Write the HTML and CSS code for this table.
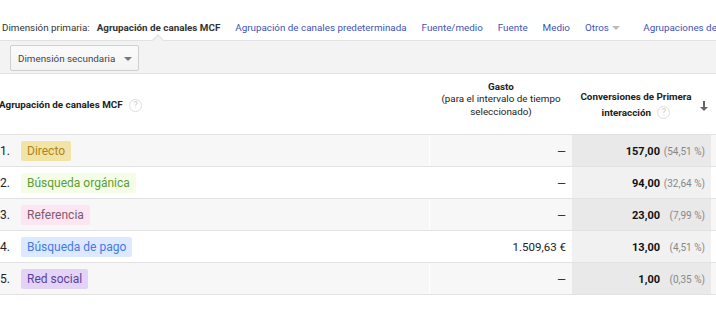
FILE: index.html
```html
<!DOCTYPE html>
<html lang="es">
<head>
    <meta charset="UTF-8">
    <meta name="viewport" content="width=device-width, initial-scale=1.0">
    <title>Agrupación de canales MCF</title>
    <link rel="stylesheet" href="styles.css">
</head>
<body>
    <div class="report">
        <div class="dimension-tabs">
            <span class="label">Dimensión primaria:</span>
            <span class="tab active">Agrupación de canales MCF</span>
            <a class="tab">Agrupación de canales predeterminada</a>
            <a class="tab">Fuente/medio</a>
            <a class="tab">Fuente</a>
            <a class="tab">Medio</a>
            <a class="tab more">Otros <span class="caret"></span></a>
            <a class="tab extra">Agrupaciones de canales</a>
        </div>

        <div class="toolbar">
            <button class="select">Dimensión secundaria <span class="caret dark"></span></button>
        </div>

        <table class="data">
            <colgroup>
                <col class="c-name">
                <col class="c-cost">
                <col class="c-conv">
                <col class="c-rest">
            </colgroup>
            <thead>
                <tr>
                    <th class="name-head"><div>Agrupación de canales MCF <span class="help">?</span></div></th>
                    <th class="cost-head"><div><b>Gasto</b><br>(para el intervalo de tiempo<br>seleccionado)</div></th>
                    <th class="conv-head">
                        <div class="conv-inner">
                            <span class="conv-title">Conversiones de Primera<br>interacción <span class="help">?</span></span>
                            <svg class="sort" width="8" height="10" viewBox="0 0 8 10">
                                <path d="M3 0h2v6h3L4 10 0 6h3z" fill="#666"/>
                            </svg>
                        </div>
                    </th>
                    <th></th>
                </tr>
            </thead>
            <tbody>
                <tr>
                    <td><span class="num">1.</span><span class="tag direct">Directo</span></td>
                    <td class="cost">&mdash;</td>
                    <td class="conv"><b>157,00</b><span class="pct">(54,51 %)</span></td>
                    <td></td>
                </tr>
                <tr>
                    <td><span class="num">2.</span><span class="tag organic">Búsqueda orgánica</span></td>
                    <td class="cost">&mdash;</td>
                    <td class="conv"><b>94,00</b><span class="pct">(32,64 %)</span></td>
                    <td></td>
                </tr>
                <tr>
                    <td><span class="num">3.</span><span class="tag referral">Referencia</span></td>
                    <td class="cost">&mdash;</td>
                    <td class="conv"><b>23,00</b><span class="pct">(7,99 %)</span></td>
                    <td></td>
                </tr>
                <tr>
                    <td><span class="num">4.</span><span class="tag paid">Búsqueda de pago</span></td>
                    <td class="cost">1.509,63 €</td>
                    <td class="conv"><b>13,00</b><span class="pct">(4,51 %)</span></td>
                    <td></td>
                </tr>
                <tr>
                    <td><span class="num">5.</span><span class="tag social">Red social</span></td>
                    <td class="cost">&mdash;</td>
                    <td class="conv"><b>1,00</b><span class="pct">(0,35 %)</span></td>
                    <td></td>
                </tr>
            </tbody>
        </table>
    </div>
</body>
</html>
```

FILE: styles.css
```css
body {
    margin: 0;
    background: #fff;
    font-family: Roboto, "Liberation Sans", Arial, sans-serif;
    color: #222;
}

.report {
    width: 716px;
    overflow: hidden;
}

/* primary dimension switcher */
.dimension-tabs {
    display: flex;
    align-items: center;
    white-space: nowrap;
    height: 14px;
    padding: 20px 0 6px 2px;
    border-bottom: 1px solid #e2e2e2;
    font-size: 9.83px;
}

.dimension-tabs .label {
    color: #333;
    margin-right: 7px;
}

.tab {
    position: relative;
    margin-right: 15px;
    color: #4151b8;
    cursor: pointer;
}

.tab.active {
    color: #333;
    font-weight: bold;
    cursor: default;
}

/* little notch under the selected tab */
.tab.active::after {
    content: "";
    position: absolute;
    left: 50%;
    bottom: -11px;
    width: 7px;
    height: 7px;
    margin-left: -4px;
    background: #f3f3f3;
    border-left: 1px solid #e2e2e2;
    border-top: 1px solid #e2e2e2;
    transform: rotate(45deg);
}

.tab.more {
    margin-right: 23px;
}

.caret {
    display: inline-block;
    width: 0;
    height: 0;
    border-left: 4px solid transparent;
    border-right: 4px solid transparent;
    border-top: 4px solid #bbb;
    vertical-align: middle;
    margin-left: 1px;
}

.caret.dark {
    border-top-color: #777;
    margin-left: 6px;
}

/* secondary dimension bar */
.toolbar {
    background: #f3f3f3;
    padding: 4px 10px 2px;
    height: 26px;
    border-bottom: 1px solid #e2e2e2;
}

.select {
    height: 26px;
    padding: 0 6px 0 7px;
    font-family: inherit;
    font-size: 9.83px;
    color: #444;
    background: linear-gradient(#fbfbfb, #f3f3f3);
    border: 1px solid #cfcfcf;
    border-radius: 2px;
}

/* report table */
.data {
    width: 730px;
    table-layout: fixed;
    border-collapse: collapse;
    font-size: 12px;
}

.c-name { width: 430px; }
.c-cost { width: 142px; }
.c-conv { width: 139px; }
.c-rest { width: 19px; }

.data th {
    height: 60px;
    padding: 0;
    font-size: 9.83px;
    border-bottom: 1px solid #e2e2e2;
    color: #222;
}

.name-head {
    text-align: left;
    font-weight: bold;
}

.name-head div {
    padding-top: 2px;
}

.name-head,
.data td:first-child {
    position: relative;
    left: -1px;
}

.cost-head {
    font-weight: normal;
    color: #444;
    line-height: 12.5px;
}

.cost-head div {
    padding-bottom: 9px;
}

.cost-head b {
    color: #222;
}

.conv-inner {
    display: flex;
    align-items: center;
    padding: 1px 0 0 2px;
    line-height: 16px;
    font-weight: bold;
}

.conv-title {
    flex: 1;
    text-align: center;
}

.sort {
    margin: 2px 3px 0 2px;
}

.help {
    display: inline-block;
    width: 11px;
    height: 11px;
    line-height: 11px;
    border: 1px solid #ddd;
    border-radius: 50%;
    color: #ccc;
    font-size: 9px;
    font-weight: normal;
    text-align: center;
    margin-left: 4px;
    vertical-align: middle;
}

.data td {
    height: 31px;
    padding: 0;
    border-bottom: 1px solid #e2e2e2;
}

.data tbody tr:nth-child(odd) {
    background: #f7f7f7;
}

.num {
    display: inline-block;
    width: 22px;
    padding-left: 1px;
    box-sizing: border-box;
    color: #222;
}

.tag {
    display: inline-block;
    padding: 3px 6px;
    border-radius: 2px;
    line-height: 14px;
}

.tag.direct   { background: #f2e3a7; color: #b08518; }
.tag.organic  { background: #f3fde8; color: #5e9e34; }
.tag.referral { background: #fde5f1; color: #7e5a70; }
.tag.paid     { background: #dde9fe; color: #4479ec; }
.tag.social   { background: #e3d3f7; color: #5a3f9c; }

.cost {
    text-align: right;
    padding-right: 6px !important;
    font-size: 11.5px;
    color: #222;
}

.conv {
    text-align: right;
    padding-right: 6px !important;
    background: #f1f1f1;
}

.data tbody tr:nth-child(odd) .conv {
    background: #e9e9e9;
}

.conv b {
    font-size: 11px;
    color: #111;
}

.pct {
    display: inline-block;
    width: 45px;
    font-size: 10px;
    color: #888;
}
```
